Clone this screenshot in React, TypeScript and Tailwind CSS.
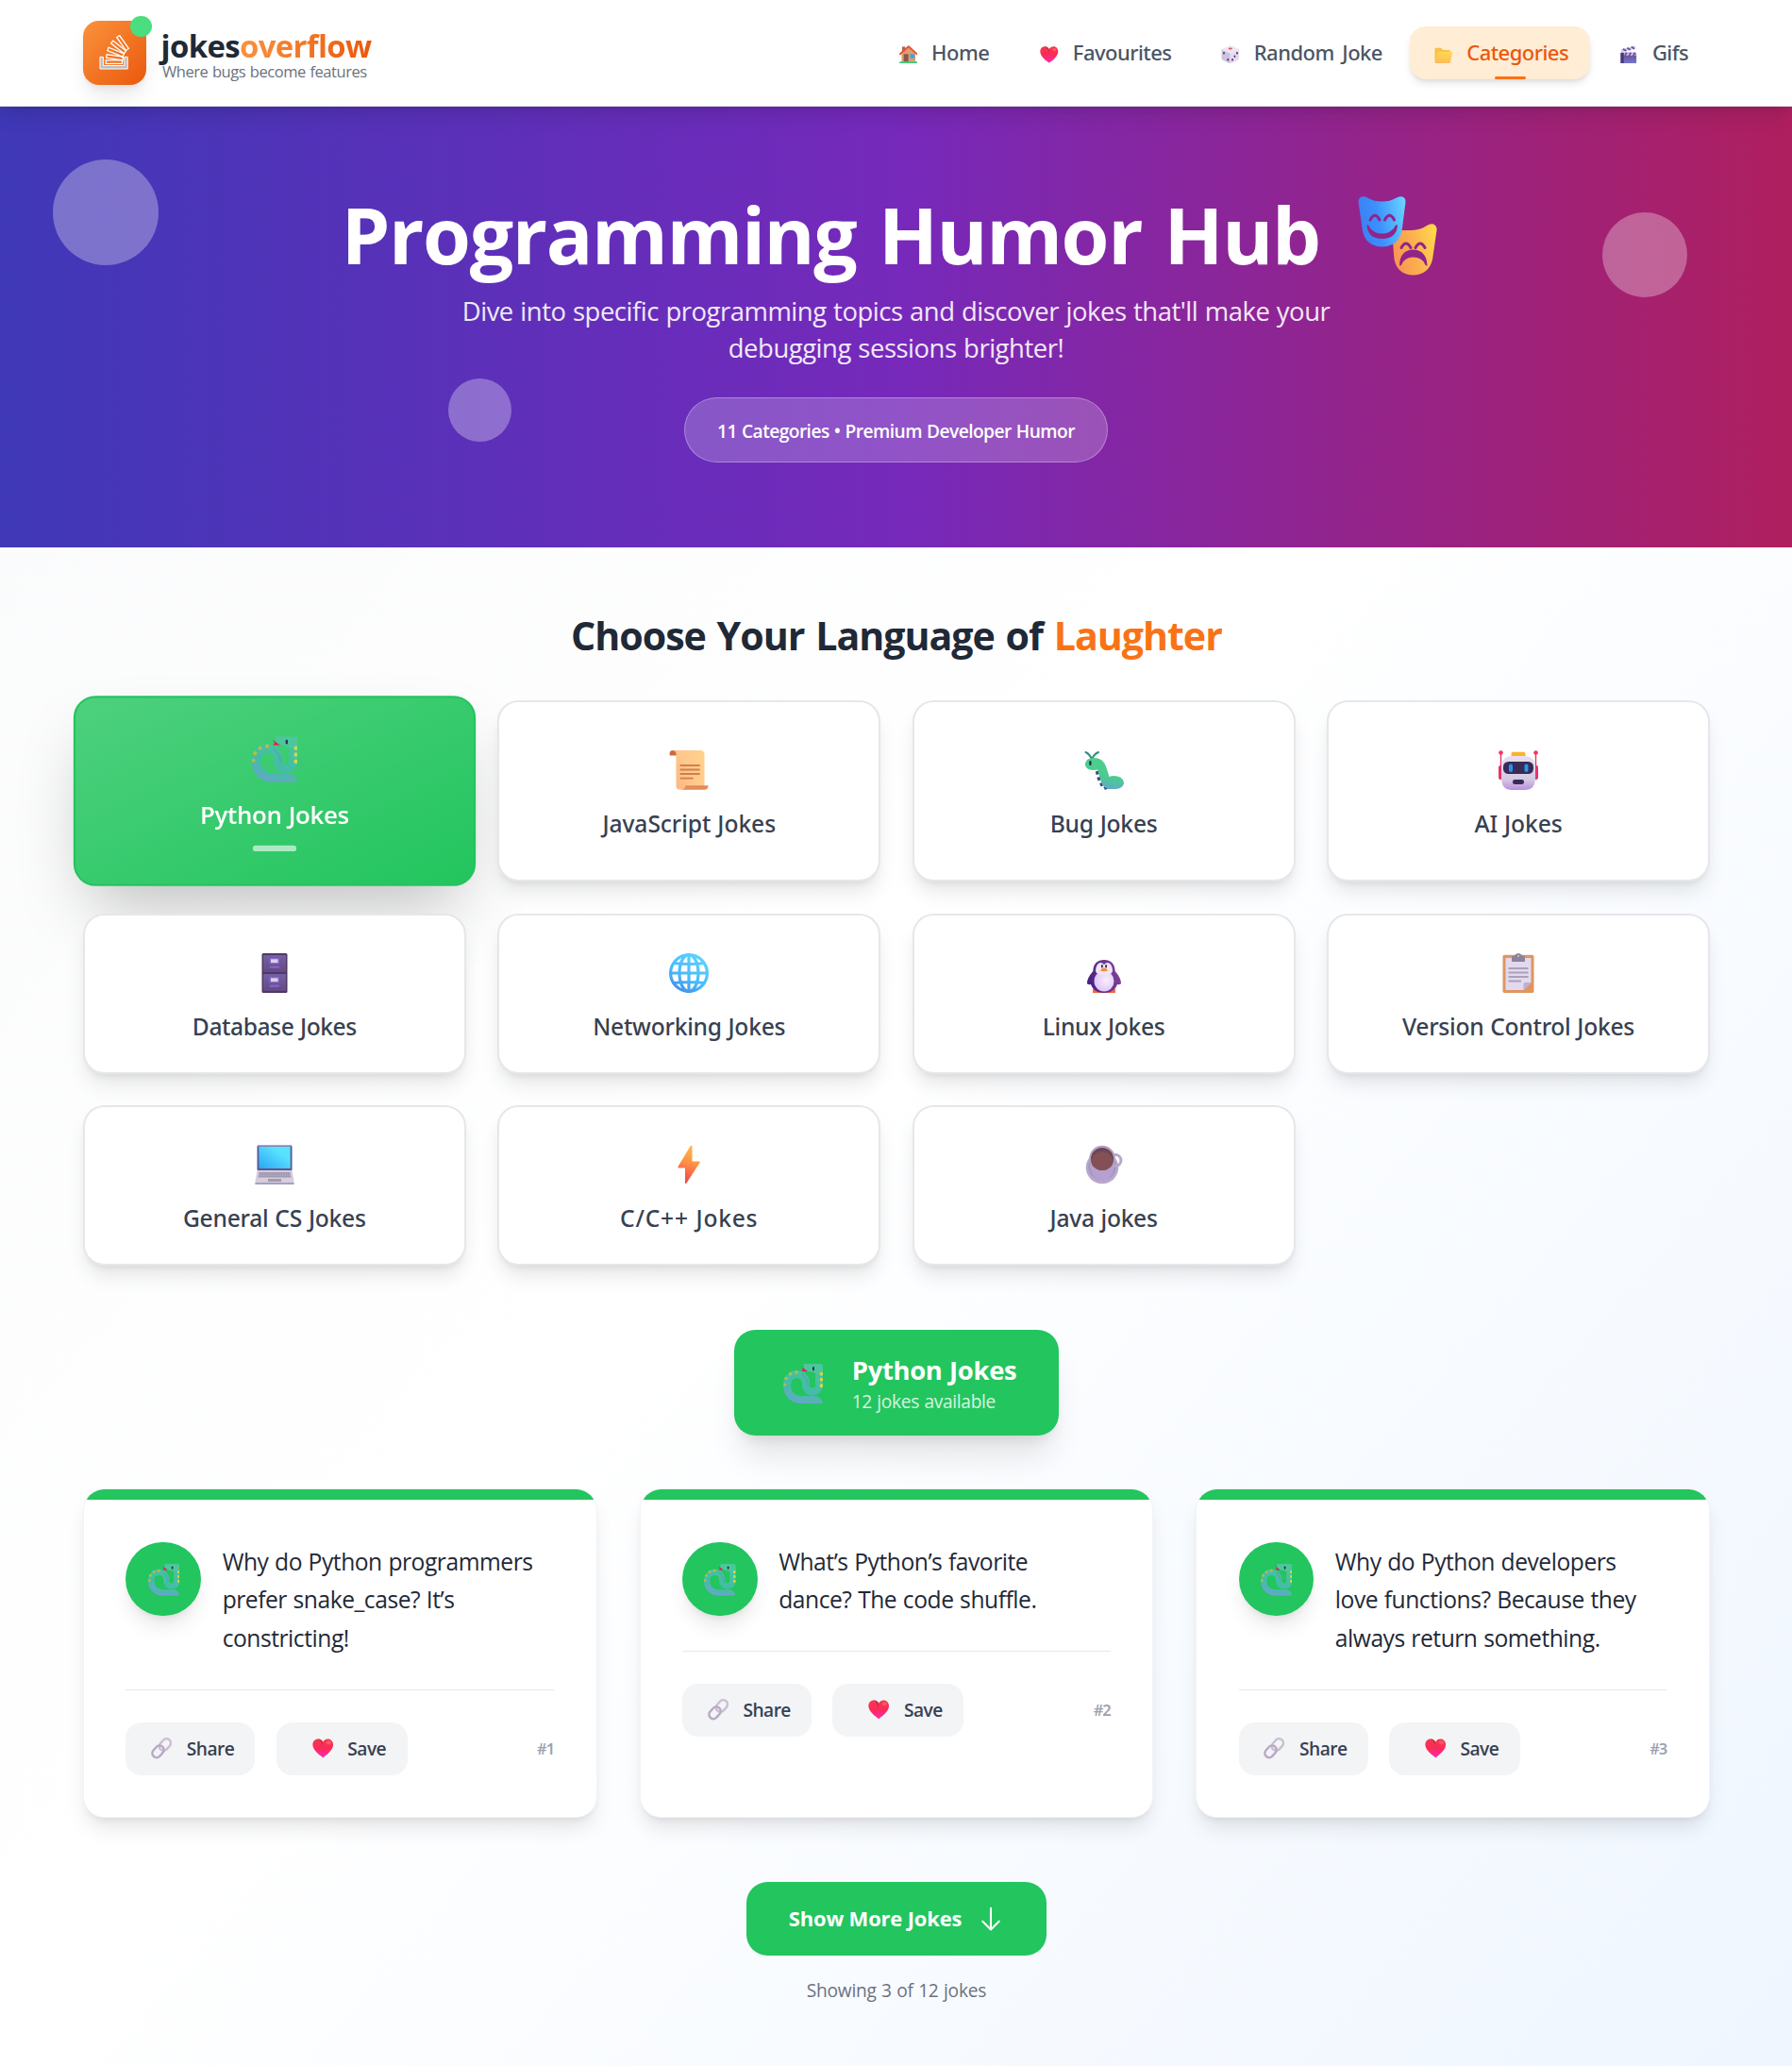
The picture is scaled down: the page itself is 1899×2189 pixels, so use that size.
import React from "react";

type IconProps = { className?: string };

const Snake = ({ className }: IconProps) => (
  <svg viewBox="0 0 42 42" className={className}>
    <defs>
      <linearGradient id="snakeBody" gradientUnits="userSpaceOnUse" x1="32" y1="2" x2="14" y2="42">
        <stop offset="0" stopColor="#49c59d" />
        <stop offset="0.6" stopColor="#43bda6" />
        <stop offset="1" stopColor="#5cadc0" />
      </linearGradient>
    </defs>
    <path d="M38 4V22.500A7 7 0 0 1 24 22.500C24.500 15 20 11 14 11C8 11 4 16 4 22.500C4 32 11 38 19 38H34" fill="none" stroke="url(#snakeBody)" strokeWidth="8" />
    <path d="M33 34Q39 34 42 40.500Q42 42 40 42H33Z" fill="#52b6ae" />
    <path d="M1.500 27C4 35.500 11 41 19.500 41H38" fill="none" stroke="#6fa0cf" strokeWidth="1.800" opacity="0.8" />
    <path d="M20 11.500C25 14.500 26 20 26.500 24" fill="none" stroke="#569fb0" strokeWidth="1.800" opacity="0.6" />
    <path d="M21.500 0H38.500Q42 0 42 3.500V10H34L30 8.500C27 8.500 24 7.500 22 5.500Z" fill="#4cc79b" />
    <path d="M26 8L19.300 3.200L21 6L19.300 8Z" fill="#e6195f" />
    <rect x="31" y="3" width="2" height="4.200" rx="1" fill="#28324a" />
    <g fill="#cfd84c">
      <rect x="38.800" y="9" width="3.200" height="3.600" rx="1" />
      <rect x="38.800" y="15" width="3.200" height="3.600" rx="1" />
      <rect x="38.800" y="21.300" width="3.200" height="3.600" rx="1" />
    </g>
    <g fill="#b6bd45">
      <circle cx="14" cy="9" r="1.800" />
      <circle cx="7.600" cy="10.800" r="1.800" />
      <circle cx="3" cy="15.500" r="1.800" />
      <circle cx="1.600" cy="22" r="1.600" />
    </g>
  </svg>
);

const Scroll = ({ className }: IconProps) => (
  <svg viewBox="0 0 42 42" className={className}>
    <defs>
      <linearGradient id="scrollPaper" x1="0" y1="0.7" x2="1" y2="0.2">
        <stop offset="0" stopColor="#fdb784" />
        <stop offset="0.5" stopColor="#ffc98c" />
        <stop offset="1" stopColor="#ffd18a" />
      </linearGradient>
    </defs>
    <path d="M4 0H10V5.500H1.500Q0.500 5.500 0.500 4Q0.500 0 4 0Z" fill="#cc6a40" />
    <path d="M3.500 0H33Q37.500 0 37.500 4.500V38H18V41.500H11Q7.500 41.500 7.500 37V4Q7.500 0.500 3.500 0Z" fill="url(#scrollPaper)" />
    <path d="M17.500 37.300H41.500Q41.500 41.700 37.500 41.700H13Q17.500 41 17.500 37.300Z" fill="#e58a58" />
    <g stroke="#d37d4c" strokeWidth="1.800" strokeLinecap="round">
      <path d="M12.300 16H32M12.300 20.500H32M12.300 25H32M12.300 29.600H25" />
    </g>
  </svg>
);

const Caterpillar = ({ className }: IconProps) => (
  <svg viewBox="0 0 42 42" className={className}>
    <defs>
      <linearGradient id="bugBody" x1="0.6" y1="0" x2="0.4" y2="1">
        <stop offset="0" stopColor="#4bd08a" />
        <stop offset="0.6" stopColor="#4cca93" />
        <stop offset="1" stopColor="#62a8c8" />
      </linearGradient>
    </defs>
    <path d="M8 10Q6 4 1.500 2M8 10Q10 4 15 2" fill="none" stroke="#2f8f7c" strokeWidth="2" strokeLinecap="round" />
    <path d="M14 22L16 30L20 38M24 41L22 37" fill="none" stroke="#344b7a" strokeWidth="4.500" strokeDasharray="3.500 3" />
    <path d="M1 14Q2 8 10 8Q20 8 23 17L26.500 28Q30 26.500 35 27.500Q42 29 42 35Q41 40.500 33 41H26Q20 39.500 18 34L14 20.500Q5 22 2 18Q0.500 16 1 14Z" fill="url(#bugBody)" />
    <rect x="5.300" y="11" width="2.200" height="5" rx="1.100" fill="#2b2340" />
  </svg>
);

const Robot = ({ className }: IconProps) => (
  <svg viewBox="0 0 42 42" className={className}>
    <defs>
      <linearGradient id="botHead" x1="0" y1="0" x2="0" y2="1">
        <stop offset="0" stopColor="#e8dff0" />
        <stop offset="0.7" stopColor="#d5c8e2" />
        <stop offset="1" stopColor="#b78fe0" />
      </linearGradient>
    </defs>
    <path d="M2.500 3V26M39.500 3V26" stroke="#e03a6a" strokeWidth="1.400" />
    <circle cx="2.500" cy="2.500" r="2.300" fill="#f8315f" />
    <circle cx="39.500" cy="2.500" r="2.300" fill="#f8315f" />
    <rect x="0" y="16" width="5" height="15" rx="2" fill="#e8336b" />
    <rect x="37" y="16" width="5" height="15" rx="2" fill="#e8336b" />
    <rect x="13.500" y="1.800" width="15" height="6" rx="2" fill="#f9b42e" />
    <path d="M12 6H30Q37 7 39 15V31Q38 42 29 42H13Q4 42 3 31V15Q5 7 12 6Z" fill="url(#botHead)" />
    <rect x="5" y="12" width="32" height="13" rx="5.500" fill="#392b58" />
    <rect x="11" y="14.500" width="4" height="8.500" rx="2" fill="#1f9bea" />
    <rect x="27.500" y="14.500" width="4" height="8.500" rx="2" fill="#1f9bea" />
    <rect x="15" y="31" width="12" height="5" rx="2.300" fill="#392b58" />
  </svg>
);

const Cabinet = ({ className }: IconProps) => (
  <svg viewBox="0 0 42 42" className={className}>
    <defs>
      <linearGradient id="drawer" x1="0" y1="0" x2="0" y2="1">
        <stop offset="0" stopColor="#6f62a6" />
        <stop offset="1" stopColor="#634a82" />
      </linearGradient>
    </defs>
    <rect x="7.500" y="0" width="27" height="42" rx="1.500" fill="#523764" />
    <rect x="9" y="2" width="24" height="18" rx="1" fill="url(#drawer)" />
    <rect x="9" y="22" width="24" height="18" rx="1" fill="url(#drawer)" />
    <rect x="15.500" y="5" width="10.500" height="6.300" rx="0.800" fill="#8b63c8" />
    <rect x="15.500" y="25" width="10.500" height="6.300" rx="0.800" fill="#8b63c8" />
    <rect x="17" y="6.300" width="7.500" height="3.800" fill="#dccdea" />
    <rect x="17" y="26.300" width="7.500" height="3.800" fill="#dccdea" />
    <rect x="15.500" y="13.500" width="10.500" height="2.200" rx="1" fill="#8b5fd0" />
    <rect x="15.500" y="33.500" width="10.500" height="2.200" rx="1" fill="#8b5fd0" />
  </svg>
);

const Globe = ({ className }: IconProps) => (
  <svg viewBox="0 0 42 42" className={className}>
    <defs>
      <linearGradient id="globeLine" gradientUnits="userSpaceOnUse" x1="30" y1="2" x2="8" y2="40">
        <stop offset="0" stopColor="#5ad2ff" />
        <stop offset="0.6" stopColor="#4ab8fb" />
        <stop offset="1" stopColor="#3f8fe8" />
      </linearGradient>
    </defs>
    <g fill="none" stroke="url(#globeLine)" strokeWidth="3.200">
      <circle cx="21" cy="21" r="19.400" />
      <ellipse cx="21" cy="21" rx="10" ry="19.400" />
      <path d="M21 1.500V40.500M1.500 21H40.500M5 10.500Q21 12.500 37 10.500M5 31.500Q21 29.500 37 31.500" />
    </g>
  </svg>
);

const Penguin = ({ className }: IconProps) => (
  <svg viewBox="0 0 42 42" className={className}>
    <defs>
      <linearGradient id="pengBody" x1="0" y1="0.5" x2="1" y2="0.2">
        <stop offset="0" stopColor="#4a2282" />
        <stop offset="1" stopColor="#84469a" />
      </linearGradient>
      <radialGradient id="pengBelly" cx="0.6" cy="0.45" r="0.6">
        <stop offset="0" stopColor="#f8effc" />
        <stop offset="1" stopColor="#dfc3fa" />
      </radialGradient>
    </defs>
    <path d="M9 42V38L15 36H27L33 38V42Z" fill="#f66a3c" />
    <path d="M21 7C28 7 32.500 11 32.700 19C36 23 39 27 39 32Q38.500 33.500 35 33C33 39 28 42 21 42C14 42 9 39 7 33Q3.500 33.500 3 32C3 27 6 23 9.300 19C9.500 11 14 7 21 7Z" fill="url(#pengBody)" />
    <ellipse cx="21" cy="29.500" rx="10.500" ry="11" fill="url(#pengBelly)" />
    <path d="M21 12Q18.500 9 15.500 10.500Q12 13 12 19Q13 23 21 23Q29 23 30 19Q30 13 26.500 10.500Q23.500 9 21 12Z" fill="#f0e4f8" />
    <rect x="18" y="12" width="1.800" height="3.500" rx="0.900" fill="#35294a" />
    <rect x="22.200" y="12" width="1.800" height="3.500" rx="0.900" fill="#35294a" />
    <path d="M17 18.500Q18 15.800 21 15.500Q24 15.800 25 18.500Q21 20 17 18.500Z" fill="#fb8b32" />
  </svg>
);

const Clipboard = ({ className }: IconProps) => (
  <svg viewBox="0 0 42 42" className={className}>
    <rect x="4.500" y="1.800" width="33" height="40.200" rx="1.800" fill="#de9660" />
    <path d="M7.500 5H34.500V31L26.500 39H7.500Z" fill="#e3d9ee" />
    <path d="M34.500 31H28Q26.500 31 26.500 33V39Z" fill="#bfaed0" />
    <path d="M14 4Q14 2.500 17 2.500Q18 0 21 0Q24 0 25 2.500Q28 2.500 28 4V9H14Z" fill="#8b8494" />
    <circle cx="21" cy="3" r="1" fill="#d4cadd" />
    <path d="M10.500 16H31.500M10.500 20.500H31.500M10.500 25H31.500M10.500 29.500H24" stroke="#aba0b6" strokeWidth="1.900" />
  </svg>
);

const Laptop = ({ className }: IconProps) => (
  <svg viewBox="0 0 42 42" className={className}>
    <defs>
      <linearGradient id="lapScreen" x1="1" y1="0" x2="0" y2="1">
        <stop offset="0.3" stopColor="#58e2ff" />
        <stop offset="1" stopColor="#2ba4f5" />
      </linearGradient>
    </defs>
    <rect x="2.500" y="0" width="37" height="28" rx="2" fill="#5c5590" />
    <path d="M3 1.500Q3 0 4.500 0H37.500Q39 0 39 1.500Z" fill="#b7a3d6" />
    <rect x="4.300" y="2" width="33.400" height="23" fill="url(#lapScreen)" />
    <path d="M2.500 27H39.500L41.500 38.500V42H0.500V38.500Z" fill="#d5cedf" />
    <path d="M4.500 29H37.500L38.500 34.500H3.500Z" fill="#9e97ab" />
    <path d="M4 30.800H38M3.800 32.700H38.200" stroke="#d0c9dc" strokeWidth="0.600" strokeDasharray="1.500 1" />
    <rect x="14" y="36" width="14" height="3" fill="#a39bb3" />
    <rect x="0.500" y="40" width="41" height="2" fill="#aa9fb8" />
  </svg>
);

const Bolt = ({ className }: IconProps) => (
  <svg viewBox="0 0 42 42" className={className}>
    <defs>
      <linearGradient id="boltFill" x1="0.6" y1="0" x2="0.4" y2="1">
        <stop offset="0" stopColor="#fcb84a" />
        <stop offset="0.45" stopColor="#fd9244" />
        <stop offset="1" stopColor="#f2404c" />
      </linearGradient>
    </defs>
    <path d="M24.500 1V17.500H32.500Q33 18 32.500 19L18.500 40.500Q17.500 41.500 17 40.500V24.500H10Q9 24 9.500 23L22.500 1.500Q23.500 0.500 24.500 1Z" fill="url(#boltFill)" />
  </svg>
);

const Coffee = ({ className }: IconProps) => (
  <svg viewBox="0 0 42 42" className={className}>
    <circle cx="19" cy="24" r="17.300" fill="#b9a8cd" />
    <circle cx="19" cy="23" r="14.800" fill="#a795c0" />
    <circle cx="33" cy="16.500" r="6" fill="none" stroke="#b7a9c8" strokeWidth="3" />
    <path d="M5.500 14Q6 38 19 38Q32 38 32.500 14Z" fill="#b5a0cf" />
    <circle cx="19" cy="14.500" r="13.700" fill="#b0a1c3" />
    <circle cx="19" cy="15" r="12" fill="#6c4656" />
    <ellipse cx="19" cy="17" rx="11.500" ry="10" fill="#825055" />
  </svg>
);

const House = ({ className }: IconProps) => (
  <svg viewBox="0 0 20 20" className={className}>
    <rect x="3" y="1.500" width="3.500" height="6" fill="#a5694c" />
    <path d="M2.500 9L10 2L17.500 9V18H2.500Z" fill="#dba06c" />
    <rect x="4.800" y="9.500" width="5" height="8.500" fill="#835a50" />
    <rect x="11.800" y="9.500" width="4.400" height="4.500" fill="#2fa5f0" />
    <path d="M0.800 9.500L10 1.200L19.200 9.500" fill="none" stroke="#ea5136" strokeWidth="2" strokeLinejoin="round" strokeLinecap="round" />
    <path d="M0 18.500Q0 17.600 1.500 17.600H18.500Q20 17.600 20 18.500V19.500H0Z" fill="#3fcb77" />
  </svg>
);

const Heart = ({ className }: IconProps) => (
  <svg viewBox="0 0 20 20" className={className}>
    <defs>
      <linearGradient id="heartFill" x1="0.5" y1="0" x2="0.5" y2="1">
        <stop offset="0" stopColor="#f43a4e" />
        <stop offset="0.5" stopColor="#fb2a58" />
        <stop offset="1" stopColor="#fb2bb0" />
      </linearGradient>
    </defs>
    <path d="M10 19C8.500 17.800 0.300 12.500 0.300 6.800C0.300 3.500 2.500 1.300 5.300 1.300C7.600 1.300 9.300 2.700 10 4.300C10.700 2.700 12.400 1.300 14.700 1.300C17.500 1.300 19.700 3.500 19.700 6.800C19.700 12.500 11.500 17.800 10 19Z" fill="url(#heartFill)" />
    <path d="M10 4.300C9.300 2.700 7.600 1.300 5.300 1.300C8 3 9.300 5.500 9.700 8.500Z" fill="#cf2747" />
    <ellipse cx="15.500" cy="4.800" rx="2.300" ry="1.800" fill="#ff6a68" opacity="0.7" />
  </svg>
);

const Dice = ({ className }: IconProps) => (
  <svg viewBox="0 0 20 20" className={className}>
    <path d="M0.500 4.300L10 8.800V20L1.500 15.800Q0.500 15 0.500 14Z" fill="#cdc3dc" />
    <path d="M19.500 4.300L10 8.800V20L18.500 15.800Q19.500 15 19.500 14Z" fill="#e4dcec" />
    <path d="M10 0L19.500 4.300L10 8.800L0.500 4.300Z" fill="#ece6f0" />
    <ellipse cx="10" cy="3.600" rx="2.200" ry="1.100" fill="#f0526a" />
    <g fill="#4c2a86">
      <ellipse cx="3" cy="8.500" rx="0.900" ry="1.300" />
      <ellipse cx="7.500" cy="15.500" rx="0.900" ry="1.300" />
      <ellipse cx="17.300" cy="8.500" rx="0.900" ry="1.300" />
      <ellipse cx="14.800" cy="12" rx="0.900" ry="1.300" />
      <ellipse cx="12.300" cy="15.500" rx="0.900" ry="1.300" />
    </g>
  </svg>
);

const Folder = ({ className }: IconProps) => (
  <svg viewBox="0 0 20 20" className={className}>
    <defs>
      <linearGradient id="folderFront" x1="0.6" y1="0" x2="0.4" y2="1">
        <stop offset="0" stopColor="#ffd94f" />
        <stop offset="1" stopColor="#fdba5c" />
      </linearGradient>
    </defs>
    <path d="M0.500 4Q0.500 2.800 1.700 2.800H7L9.500 5H16Q17 5 17 6V17H0.500Z" fill="#f9c043" />
    <path d="M5 7H18.500Q19.800 7 19.500 8.300L17.300 18Q17 19.500 15.500 19.500H2Q0.500 19.500 0.500 18L3.200 8.500Q3.600 7 5 7Z" fill="url(#folderFront)" />
  </svg>
);

const Clapper = ({ className }: IconProps) => (
  <svg viewBox="0 0 20 20" className={className}>
    <defs>
      <linearGradient id="clapFill" x1="0" y1="0" x2="0" y2="1">
        <stop offset="0" stopColor="#6a4a8f" />
        <stop offset="1" stopColor="#7478cf" />
      </linearGradient>
    </defs>
    <path d="M1.500 4.500L17 0.500L17.800 3.500L2.300 7.500Z" fill="#d9cdee" />
    <path d="M4 4L7.500 6.100M8.500 2.800L12 5M13 1.600L16.500 3.800" stroke="#6f52a8" strokeWidth="2" />
    <rect x="1.500" y="8" width="17" height="12" rx="1.300" fill="url(#clapFill)" />
    <rect x="1.500" y="8" width="3.300" height="12" rx="1" fill="#4b3a74" />
    <path d="M5 8.300H18V11H5Z" fill="#d9cdee" />
    <path d="M6 11.200L8 8M10.500 11.200L12.500 8M15 11.200L17 8" stroke="#6f52a8" strokeWidth="2" />
  </svg>
);

const Link = ({ className }: IconProps) => (
  <svg viewBox="0 0 22 22" className={className}>
    <g fill="none" strokeWidth="2.400">
      <rect x="-4.500" y="-6.800" width="9" height="13.600" rx="4.500" transform="translate(14.600 7.400) rotate(42)" stroke="#cbbfd3" />
      <rect x="-4.500" y="-6.800" width="9" height="13.600" rx="4.500" transform="translate(7.400 14.600) rotate(42)" stroke="#b9a9c4" />
    </g>
  </svg>
);

const Masks = ({ className }: IconProps) => (
  <svg viewBox="0 0 84 84" className={className}>
    <defs>
      <linearGradient id="maskHappy" x1="0" y1="0.4" x2="1" y2="0.2">
        <stop offset="0" stopColor="#3d7ff0" />
        <stop offset="0.4" stopColor="#3b91ff" />
        <stop offset="1" stopColor="#68d4ff" />
      </linearGradient>
      <linearGradient id="maskSad" x1="0" y1="0.6" x2="1" y2="0.3">
        <stop offset="0" stopColor="#f99350" />
        <stop offset="0.5" stopColor="#fbb04f" />
        <stop offset="1" stopColor="#ffd84a" />
      </linearGradient>
    </defs>
    <path d="M36 36Q45 36 57 36Q67 35.500 73 31Q77 28.500 80 29.500Q84 31.500 83.500 36L79 67Q75 83 58.500 83.500Q42 83 38.500 67Z" fill="url(#maskSad)" />
    <path d="M0.500 6Q0.500 1 5 0.300Q8 0 11 2Q17 5.500 25.500 5.500Q34 5.500 40 2Q43 0 46 0.300Q50.500 1 50.500 6L46.500 37Q43 53 25.500 53.500Q8.500 53 5 37Z" fill="url(#maskHappy)" />
    <g fill="none" stroke="#902489" strokeLinecap="round" strokeWidth="3">
      <path d="M13 25Q18 15.500 23 25M28.500 25Q33.500 15.500 38.500 25" />
      <path d="M46 54.500Q51 45.500 56 54.500M61 54.500Q66 45.500 71 54.500" />
    </g>
    <path d="M9.500 30.500Q11 29 13 34Q18 39.500 25.500 39.500Q33 39.500 38 34Q40 29 42 30.500Q41 45 25.500 45Q10.500 45 9.500 30.500Z" fill="#902489" />
    <path d="M44 73Q44.500 57 58.500 56.500Q72.500 57 73.500 73Q72.500 74.500 71 72Q68 64.500 58.500 64.500Q49.500 64.500 46.500 72Q45 74.500 44 73Z" fill="#902489" />
  </svg>
);

const StackLogo = ({ className }: IconProps) => (
  <svg viewBox="0 0 32 38" className={className}>
    <path d="M0.800 23.500H4.200V32.700H26.800V23.500H30.200V36.200H0.800Z" fill="#bdbdbd" stroke="#fff" strokeWidth="1" />
    <g fill="none" stroke="#fff" strokeWidth="1.300">
      <rect x="7" y="27" width="17.500" height="3.600" />
      <rect x="-8.800" y="-1.800" width="17.600" height="3.600" transform="translate(16.500 23.800) rotate(8)" />
      <rect x="-8.800" y="-1.800" width="17.600" height="3.600" transform="translate(17.500 18.300) rotate(22)" />
      <rect x="-8.800" y="-1.800" width="17.600" height="3.600" transform="translate(20.500 13) rotate(38)" />
      <rect x="-8.500" y="-1.800" width="17" height="3.600" transform="translate(25 8.500) rotate(55)" />
    </g>
  </svg>
);

const navItems = [
  { label: "Home", Icon: House, width: "w-[43.800px]", active: false },
  { label: "Favourites", Icon: Heart, width: "w-[73.900px]", active: false },
  { label: "Random Joke", Icon: Dice, width: "w-[97.900px]", active: false },
  { label: "Categories", Icon: Folder, width: "w-[77.300px]", active: true },
  { label: "Gifs", Icon: Clapper, width: "w-[27.600px]", active: false },
];

const categories = [
  { label: "JavaScript Jokes", Icon: Scroll, tracking: "tracking-[-0.003em]" },
  { label: "Bug Jokes", Icon: Caterpillar, tracking: "tracking-[-0.010em]" },
  { label: "AI Jokes", Icon: Robot, tracking: "tracking-[-0.004em]" },
  { label: "Database Jokes", Icon: Cabinet, tracking: "tracking-[-0.018em]" },
  { label: "Networking Jokes", Icon: Globe, tracking: "tracking-[-0.011em]" },
  { label: "Linux Jokes", Icon: Penguin, tracking: "tracking-[-0.013em]" },
  { label: "Version Control Jokes", Icon: Clipboard, tracking: "tracking-[-0.011em]" },
  { label: "General CS Jokes", Icon: Laptop, tracking: "tracking-[-0.010em]" },
  { label: "C/C++ Jokes", Icon: Bolt, tracking: "tracking-[0.030em]" },
  { label: "Java jokes", Icon: Coffee, tracking: "tracking-[-0.012em]" },
];

const jokes = [
  ["Why do Python programmers", "prefer snake_case? It’s", "constricting!"],
  ["What’s Python’s favorite", "dance? The code shuffle."],
  ["Why do Python developers", "love functions? Because they", "always return something."],
];

function Header() {
  return (
    <header className="relative z-10 border-b border-gray-200 bg-white shadow-lg">
      <div className="mx-auto flex h-20 max-w-7xl items-center justify-between pr-6 pl-[24.600px]">
        <div className="flex items-center gap-[11px]">
          <div className="relative flex size-12 items-center justify-center rounded-xl bg-linear-to-br/srgb from-[#fb923c] to-[#ea580c] shadow-lg">
            <StackLogo className="h-[27px] w-[23px]" />
            <span className="absolute -top-1 -right-1 size-4 rounded-full bg-[#4ade80]" />
          </div>
          <div className="pt-1">
            <div className="text-[23.500px] leading-6 font-bold tracking-[-0.019em] whitespace-nowrap text-[#1f2937]">
              jokes
              <span className="bg-linear-to-r/srgb from-[#fb923c] to-[#ea580c] bg-clip-text text-transparent">overflow</span>
            </div>
            <div className="pl-px text-[11.800px] leading-3.5 tracking-[-0.027em] whitespace-nowrap text-[#6b7280]">Where bugs become features</div>
          </div>
        </div>
        <nav className="flex items-center gap-1">
          {navItems.map(({ label, Icon, width, active }) => (
            <a
              key={label}
              className={
                active
                  ? "relative flex h-10 items-center gap-2 rounded-xl bg-[#ffedd5] px-4 text-[#ea580c] shadow-md"
                  : "relative flex h-10 items-center gap-2 rounded-xl px-4 text-[#4b5563]"
              }
            >
              <span className="flex w-[19.200px] justify-center pt-0.5">
                <Icon className="size-3.5" />
              </span>
              <span className={`${width} font-['Noto_Sans',sans-serif] text-[15.700px] leading-6 font-medium tracking-[-0.024em] whitespace-nowrap [word-spacing:2.500px]`}>{label}</span>
              {active && <span className="absolute bottom-0 left-1/2 -ml-1 h-0.5 w-6 rounded-full bg-[#f97316]" />}
            </a>
          ))}
        </nav>
      </div>
    </header>
  );
}

function Hero() {
  return (
    <section className="relative bg-linear-to-r/srgb from-[#3f38b7] via-[#7629bb] to-[#af1f5f] py-16 text-white">
      <span className="absolute top-10 left-10 size-20 rounded-full bg-white/30" />
      <span className="absolute top-20 right-[79.500px] size-16 rounded-full bg-white/30" />
      <span className="absolute bottom-20 left-1/4 size-12 rounded-full bg-white/30" />
      <div className="relative flex flex-col items-center text-center">
        <h1 className="mb-4 flex h-[60px] items-center gap-[29px] text-[58.800px] leading-none font-bold tracking-[-0.017em] whitespace-nowrap [word-spacing:2.500px]">
          <span className="translate-y-[3px]">Programming Humor Hub</span>
          <Masks className="mt-2 mr-2.5 size-[60px]" />
        </h1>
        <p className="mb-6 translate-y-[0.040em] text-[19.600px] leading-7 tracking-[-0.017em] text-white/90 [word-spacing:0.600px]">
          Dive into specific programming topics and discover jokes that'll make your
          <br />
          debugging sessions brighter!
        </p>
        <div className="rounded-full border border-white/30 bg-white/20 px-6 py-3 text-[13.700px] leading-6 font-semibold tracking-[-0.029em] whitespace-nowrap">
          <div className="translate-y-[0.050em]">11 Categories • Premium Developer Humor</div>
        </div>
      </div>
    </section>
  );
}

function Categories() {
  return (
    <div className="mb-12 grid grid-cols-4 gap-6">
      <div className="relative flex scale-105 flex-col items-center justify-center rounded-2xl border-2 border-[#22c55e] bg-[#22c55e] bg-linear-to-br/srgb from-white/20 to-white/0 bg-origin-border p-6 text-white shadow-2xl">
        <span className="mb-3 flex h-9 items-center">
          <Snake className="mt-1 size-[33px]" />
        </span>
        <span className="translate-y-[0.060em] text-[17.600px] leading-[22.500px] font-semibold tracking-[-0.013em]">Python Jokes</span>
        <span className="mt-3 h-1 w-8 rounded-full bg-white/60" />
      </div>
      {categories.map(({ label, Icon, tracking }) => (
        <div key={label} className="relative flex flex-col items-center justify-center rounded-2xl border-2 border-[#e5e7eb] bg-white p-6 text-[#374151] shadow-lg">
          <span className="mb-3 flex h-9 items-center">
            <Icon className="mt-[3px] size-[30px]" />
          </span>
          <span className={`${tracking} translate-y-[0.050em] font-['Noto_Sans',sans-serif] text-[17.600px] leading-[22.500px] font-medium`}>{label}</span>
        </div>
      ))}
    </div>
  );
}

function JokeCard({ lines, index }: { lines: string[]; index: number }) {
  return (
    <article className="overflow-hidden rounded-2xl border border-[#f3f4f6] bg-white shadow-lg">
      <div className="h-2 bg-[#22c55e]" />
      <div className="p-8 pl-[31.800px]">
        <div className="mb-6 flex items-start gap-4">
          <span className="flex h-14 w-[57px] shrink-0 items-center justify-center rounded-full bg-[#22c55e] shadow-lg">
            <Snake className="mt-0.5 size-6" />
          </span>
          <p className="translate-y-px text-[17.600px] leading-[29.250px] tracking-[-0.019em] whitespace-nowrap text-[#1f2937]">
            {lines.map((line) => (
              <span key={line} className="block">
                {line}
              </span>
            ))}
          </p>
        </div>
        <div className="flex items-center justify-between border-t border-[#e5e7eb] pt-6">
          <div className="flex gap-4 text-[13.700px] font-semibold tracking-[-0.028em] text-[#374151]">
            <span className="flex h-10 w-[97.800px] items-center rounded-xl bg-[#f3f4f6] pl-[19px]">
              <Link className="mr-[11px] size-4" />
              <span className="translate-y-px">Share</span>
            </span>
            <span className="flex h-10 w-[99.300px] items-center rounded-xl bg-[#f3f4f6] pl-[27px]">
              <Heart className="mr-[11px] size-4" />
              <span className="translate-y-px">Save</span>
            </span>
          </div>
          <span className="translate-y-[0.500px] font-['Noto_Sans',sans-serif] text-[11.800px] font-semibold tracking-[-0.070em] text-[#9ca3af]">#{index}</span>
        </div>
      </div>
    </article>
  );
}

export default function App() {
  return (
    <div className="[zoom:1.4] bg-linear-to-br/srgb from-[#f9fafb] via-white to-[#eff6ff] font-['Open_Sans','Noto_Sans',sans-serif] [word-spacing:0.5px]">
      <Header />
      <Hero />
      <main className="mx-auto max-w-7xl py-12 pr-6 pl-[24.600px]">
        <h2 className="mb-8 translate-y-[0.020em] text-center text-[29.400px] leading-9 font-bold tracking-[-0.025em] text-[#1f2937] [word-spacing:1.500px]">
          Choose Your Language of <span className="text-[#f97316]">Laughter</span>
        </h2>
        <Categories />
        <div className="mb-10 flex justify-center">
          <div className="flex h-20 w-[246px] items-center rounded-2xl bg-[#22c55e] pl-[37.500px] text-white shadow-xl">
            <Snake className="mt-0.5 mr-[21.800px] size-[30px] shrink-0" />
            <div className="translate-y-px">
              <div className="text-[19.600px] leading-7 font-bold tracking-[-0.012em] whitespace-nowrap">Python Jokes</div>
              <div className="text-[13.700px] leading-5 tracking-[-0.017em] whitespace-nowrap text-white/80">12 jokes available</div>
            </div>
          </div>
        </div>
        <div className="mb-12 grid grid-cols-3 gap-8">
          {jokes.map((lines, i) => (
            <JokeCard key={i} lines={lines} index={i + 1} />
          ))}
        </div>
        <div className="flex flex-col items-center gap-4">
          <button className="flex h-14 w-[227.500px] items-center justify-center gap-3 rounded-2xl bg-[#22c55e] text-[15.700px] leading-6 font-bold tracking-[-0.008em] whitespace-nowrap text-white">
            <span>Show More Jokes</span>
            <svg viewBox="0 0 20 20" className="size-5" fill="none" stroke="currentColor" strokeWidth="1.500" strokeLinecap="round" strokeLinejoin="round">
              <path d="M10 2V18M3.800 12L10 18.200L16.200 12" />
            </svg>
          </button>
          <p className="translate-y-[0.050em] text-[13.700px] leading-5 tracking-[-0.013em] text-[#6b7280]">Showing 3 of 12 jokes</p>
        </div>
      </main>
    </div>
  );
}
